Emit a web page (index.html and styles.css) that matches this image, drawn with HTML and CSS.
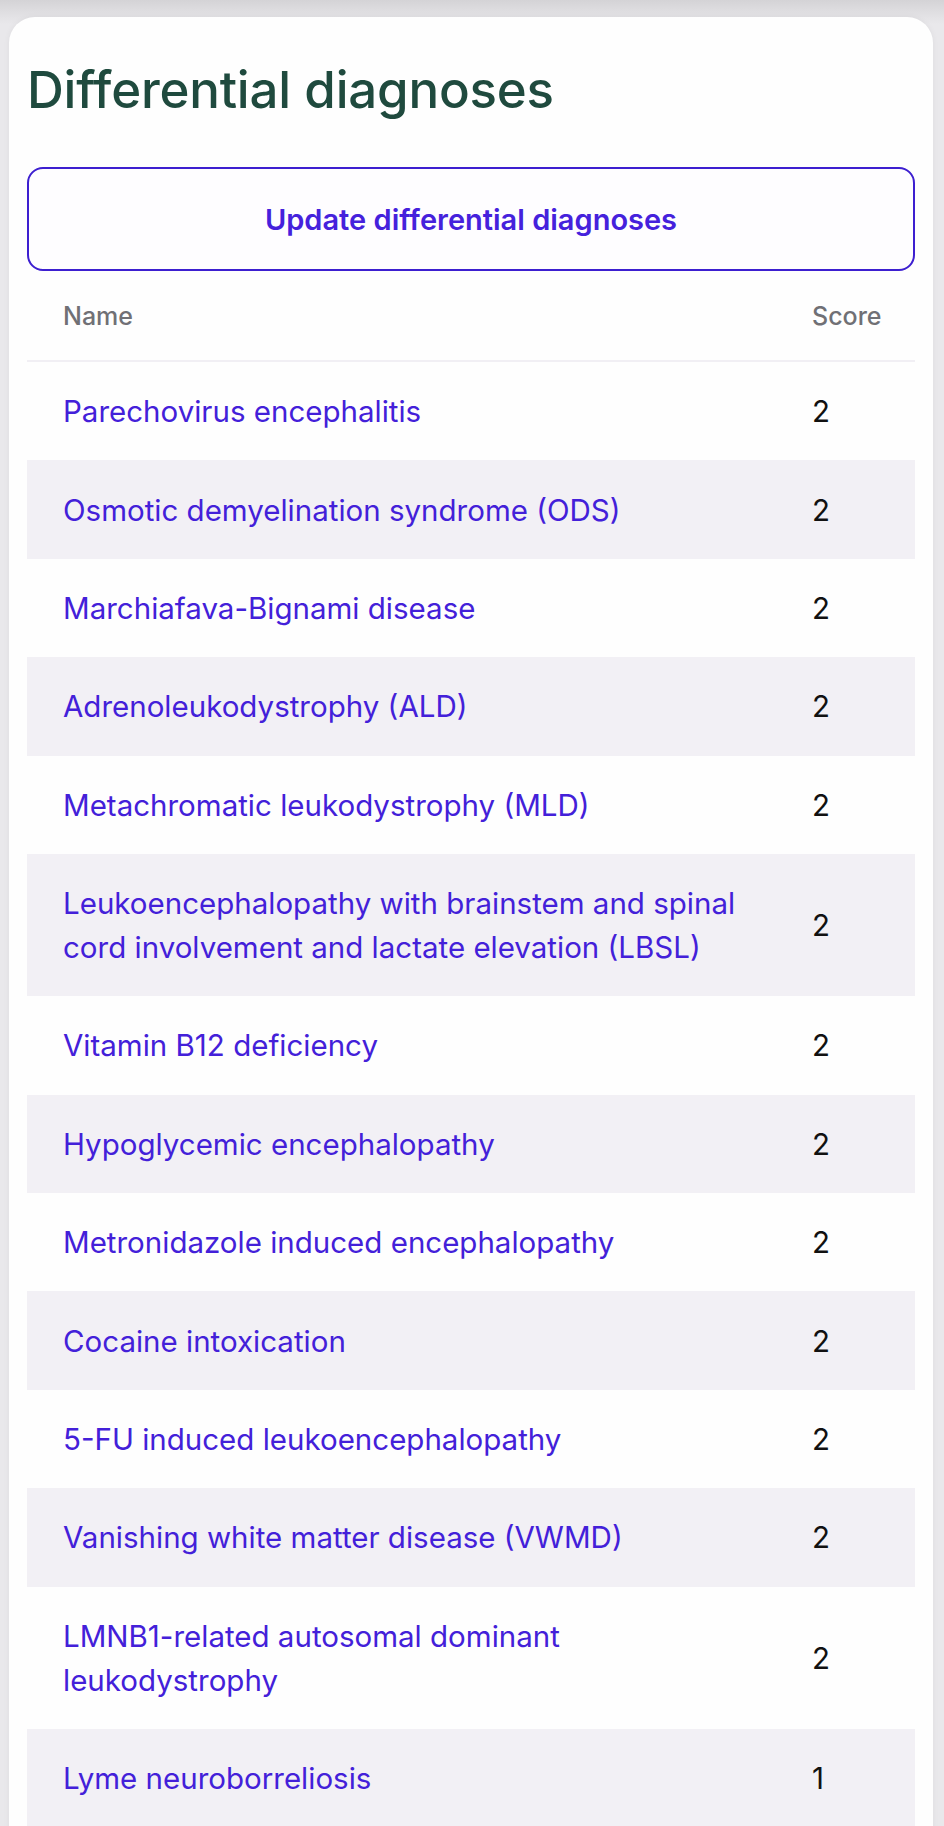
FILE: index.html
```html
<!DOCTYPE html>
<html lang="en">
<head>
<meta charset="utf-8">
<title>Differential diagnoses</title>
<link rel="stylesheet" href="styles.css">
</head>
<body>
<main class="card">
  <h1 class="title">Differential diagnoses</h1>
  <button class="update-btn" type="button">Update differential diagnoses</button>
  <table class="ddx">
    <thead>
      <tr><th class="col-name">Name</th><th class="col-score">Score</th></tr>
    </thead>
    <tbody>
      <tr><td class="col-name"><a href="#">Parechovirus encephalitis</a></td><td class="col-score">2</td></tr>
      <tr><td class="col-name"><a href="#">Osmotic demyelination syndrome (ODS)</a></td><td class="col-score">2</td></tr>
      <tr><td class="col-name"><a href="#">Marchiafava-Bignami disease</a></td><td class="col-score">2</td></tr>
      <tr><td class="col-name"><a href="#">Adrenoleukodystrophy (ALD)</a></td><td class="col-score">2</td></tr>
      <tr><td class="col-name"><a href="#">Metachromatic leukodystrophy (MLD)</a></td><td class="col-score">2</td></tr>
      <tr><td class="col-name"><a href="#">Leukoencephalopathy with brainstem and spinal cord involvement and lactate elevation (LBSL)</a></td><td class="col-score">2</td></tr>
      <tr><td class="col-name"><a href="#">Vitamin B12 deficiency</a></td><td class="col-score">2</td></tr>
      <tr><td class="col-name"><a href="#">Hypoglycemic encephalopathy</a></td><td class="col-score">2</td></tr>
      <tr><td class="col-name"><a href="#">Metronidazole induced encephalopathy</a></td><td class="col-score">2</td></tr>
      <tr><td class="col-name"><a href="#">Cocaine intoxication</a></td><td class="col-score">2</td></tr>
      <tr><td class="col-name"><a href="#">5-FU induced leukoencephalopathy</a></td><td class="col-score">2</td></tr>
      <tr><td class="col-name"><a href="#">Vanishing white matter disease (VWMD)</a></td><td class="col-score">2</td></tr>
      <tr><td class="col-name"><a href="#">LMNB1-related autosomal dominant leukodystrophy</a></td><td class="col-score">2</td></tr>
      <tr class="last-row"><td class="col-name"><a href="#">Lyme neuroborreliosis</a></td><td class="col-score">1</td></tr>
    </tbody>
  </table>
</main>
</body>
</html>
```

FILE: styles.css
```css
html, body {
  margin: 0;
  padding: 0;
}

body {
  font-family: Inter, "Noto Sans", "Liberation Sans", sans-serif;
  background: linear-gradient(to bottom, #d4d3d6 0px, #dfdee1 12px, #e9e8eb 24px) no-repeat, #e9e8eb;
  height: 1826px;
  overflow: hidden;
  padding: 17px 11px 0 9px;
  box-sizing: border-box;
}

.card {
  background: #fefefe;
  border-radius: 26px 26px 0 0;
  padding: 43px 18px 0 18px;
  min-height: 1900px;
  box-shadow: 0 0 6px rgba(0, 0, 0, 0.05);
}

.title {
  margin: 0;
  font-size: 51px;
  line-height: 60px;
  font-weight: 500;
  color: #1f4a3e;
  letter-spacing: -0.2px;
}

.update-btn {
  display: block;
  width: 100%;
  height: 104px;
  margin-top: 47px;
  background: #fefdff;
  border: 2px solid #3d1fd0;
  border-radius: 16px;
  font-family: inherit;
  font-size: 29px;
  font-weight: 600;
  color: #4521dc;
  cursor: pointer;
}

.ddx {
  width: 100%;
  border-collapse: collapse;
  table-layout: fixed;
}

.ddx th {
  padding: 27px 20px 26px 36px;
  font-size: 25px;
  line-height: 36px;
  font-weight: 500;
  color: #707075;
  text-align: left;
  border-bottom: 2px solid #f1eff4;
}

.ddx td {
  padding: 27.2px 20px 27.2px 36px;
  font-size: 29.5px;
  line-height: 44px;
  color: #111111;
  vertical-align: middle;
}

.ddx .col-score {
  width: 83px;
}

.ddx tbody tr:nth-child(even) {
  background: #f2f0f5;
}

.ddx .last-row td {
  padding-bottom: 60px;
}

.ddx a {
  color: #4320d9;
  text-decoration: none;
}
```
